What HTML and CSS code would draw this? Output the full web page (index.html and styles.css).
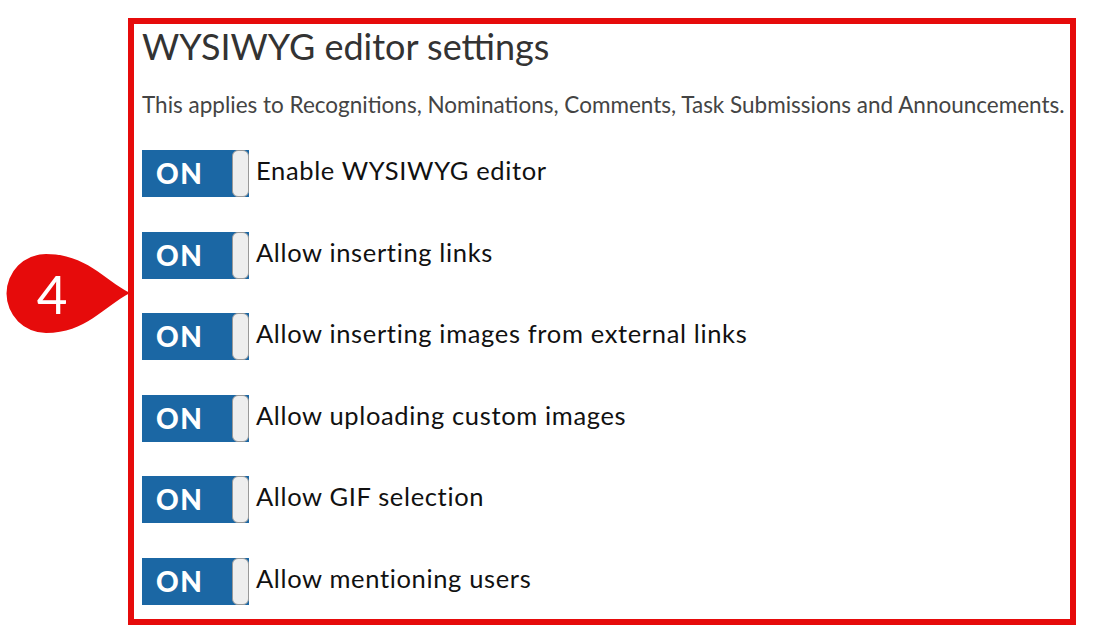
FILE: index.html
```html
<!DOCTYPE html>
<html>
<head>
<meta charset="utf-8">
<link rel="stylesheet" href="styles.css">
</head>
<body>
<div class="badge">
  <svg width="135" height="90" viewBox="0 0 135 90"><path d="M130,45 C103,31 86,6 46,6 A39.5,39.5 0 1 0 46,85 C86,85 103,59 130,45 Z" fill="#e60b0b"/></svg>
  <span class="badge-num">4</span>
</div>
<div class="panel">
  <h1 class="title">WYSIWYG editor settings</h1>
  <p class="desc">This applies to Recognitions, Nominations, Comments, Task Submissions and Announcements.</p>
  <div class="rows">
    <div class="row"><div class="toggle"><span class="on">ON</span><span class="handle"></span></div><span class="label">Enable WYSIWYG editor</span></div>
    <div class="row"><div class="toggle"><span class="on">ON</span><span class="handle"></span></div><span class="label">Allow inserting links</span></div>
    <div class="row"><div class="toggle"><span class="on">ON</span><span class="handle"></span></div><span class="label">Allow inserting images from external links</span></div>
    <div class="row"><div class="toggle"><span class="on">ON</span><span class="handle"></span></div><span class="label">Allow uploading custom images</span></div>
    <div class="row"><div class="toggle"><span class="on">ON</span><span class="handle"></span></div><span class="label">Allow GIF selection</span></div>
    <div class="row"><div class="toggle"><span class="on">ON</span><span class="handle"></span></div><span class="label">Allow mentioning users</span></div>
  </div>
</div>
</body>
</html>
```
FILE: styles.css
```css
html, body {
  margin: 0;
  padding: 0;
  background: #fff;
  font-family: Lato, "Open Sans", sans-serif;
}
body {
  position: relative;
  width: 1094px;
  height: 626px;
  overflow: hidden;
}
.badge {
  position: absolute;
  left: 0;
  top: 248px;
  width: 135px;
  height: 90px;
}
.badge svg {
  display: block;
}
.badge-num {
  position: absolute;
  left: 32px;
  top: 16px;
  width: 40px;
  text-align: center;
  color: #fff;
  font-size: 53px;
  line-height: 60px;
  font-weight: 400;
}
.panel {
  margin: 18px 0 0 128px;
  height: 595px;
  border: 6px solid #e60b0b;
  padding: 0 0 0 8px;
  width: 928px;
}
.title {
  margin: 0;
  font-size: 36px;
  font-weight: 400;
  color: #333;
  line-height: 44px;
}
.desc {
  margin: 23px 0 0;
  font-size: 22.5px;
  color: #444;
  line-height: 28px;
}
.rows {
  display: flex;
  flex-direction: column;
  gap: 34.5px;
  margin-top: 31px;
}
.row {
  display: flex;
  align-items: center;
  gap: 7px;
  height: 47px;
}
.toggle {
  position: relative;
  width: 107px;
  height: 47px;
  background: #1b67a4;
  flex: none;
}
.on {
  position: absolute;
  left: 14px;
  top: 0;
  line-height: 47px;
  color: #fff;
  font-weight: 900;
  font-size: 28px;
  letter-spacing: 1.5px;
}
.handle {
  position: absolute;
  right: 0;
  top: 0;
  width: 15px;
  height: 45px;
  background: #eeeeee;
  border: 1px solid #999;
  border-radius: 6px;
}
.label {
  font-size: 25.5px;
  letter-spacing: 0.65px;
  line-height: 31px;
  margin-bottom: 6px;
  color: #111;
}
```
